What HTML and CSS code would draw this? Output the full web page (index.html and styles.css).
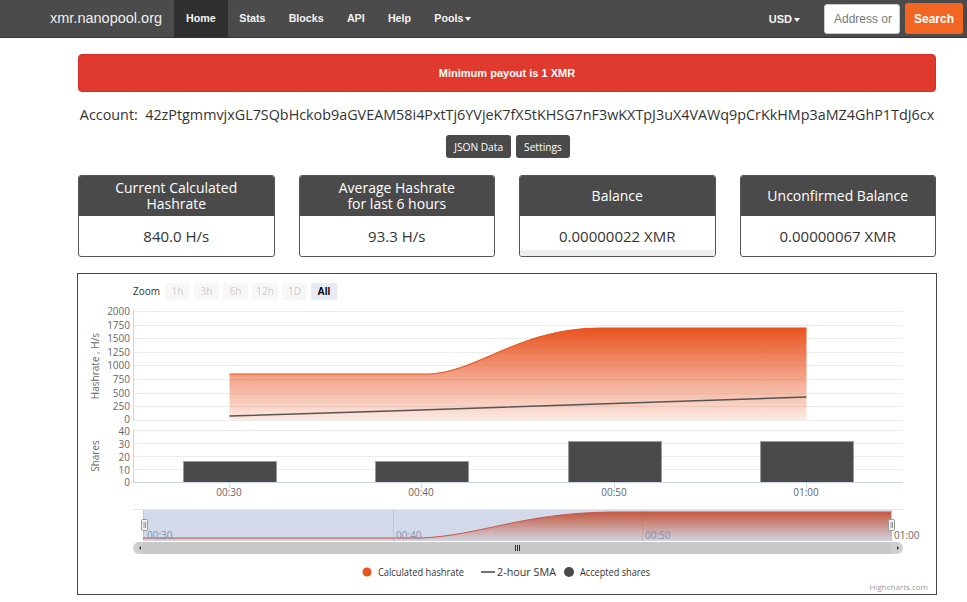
FILE: index.html
```html
<!DOCTYPE html>
<html>
<head>
<meta charset="utf-8">
<link rel="stylesheet" href="styles.css">
</head>
<body>
<nav class="navbar">
  <a class="brand">xmr.nanopool.org</a>
  <ul class="nav">
    <li class="active">Home</li>
    <li>Stats</li>
    <li>Blocks</li>
    <li>API</li>
    <li>Help</li>
    <li>Pools<span class="caret"></span></li>
  </ul>
  <div class="nav-right">
    <span class="currency">USD<span class="caret"></span></span>
    <input class="search-input" placeholder="Address or">
    <button class="search-btn">Search</button>
  </div>
</nav>
<main class="container">
  <div class="alert">Minimum payout is 1 XMR</div>
  <div class="account">Account:&nbsp; 42zPtgmmvjxGL7SQbHckob9aGVEAM58i4PxtTj6YVjeK7fX5tKHSG7nF3wKXTpJ3uX4VAWq9pCrKkHMp3aMZ4GhP1TdJ6cx</div>
  <div class="actions">
    <button class="btn">JSON Data</button>
    <button class="btn">Settings</button>
  </div>
  <div class="cards">
    <div class="card"><div class="card-head">Current Calculated<br>Hashrate</div><div class="card-body">840.0 H/s</div></div>
    <div class="card"><div class="card-head">Average Hashrate<br>for last 6 hours</div><div class="card-body">93.3 H/s</div></div>
    <div class="card"><div class="card-head">Balance</div><div class="card-body balance">0.00000022 XMR</div></div>
    <div class="card"><div class="card-head">Unconfirmed Balance</div><div class="card-body">0.00000067 XMR</div></div>
  </div>
  <div class="chart-box">
    <svg class="chart" width="857" height="320" viewBox="0 0 857 320" xmlns="http://www.w3.org/2000/svg">
      <defs>
        <linearGradient id="hg" x1="0" y1="0" x2="0" y2="1">
          <stop offset="0" stop-color="#e8531f" stop-opacity="1"/>
          <stop offset="1" stop-color="#e8531f" stop-opacity="0.12"/>
        </linearGradient>
        <linearGradient id="ng" x1="0" y1="0" x2="0" y2="1">
          <stop offset="0" stop-color="#c45a40" stop-opacity="1"/>
          <stop offset="1" stop-color="#c45a40" stop-opacity="0.05"/>
        </linearGradient>
      </defs>
      <g transform="translate(-78,-273)" font-family="'Open Sans', 'DejaVu Sans', sans-serif">
        <!-- range selector -->
        <text x="133" y="294" font-size="10" fill="#333">Zoom</text>
        <g font-size="10" fill="#cccccc" text-anchor="middle">
          <rect x="165" y="282" width="25" height="17" fill="#f7f7f7"/><text x="177.5" y="294">1h</text>
          <rect x="194" y="282" width="25" height="17" fill="#f7f7f7"/><text x="206.5" y="294">3h</text>
          <rect x="223" y="282" width="25" height="17" fill="#f7f7f7"/><text x="235.5" y="294">6h</text>
          <rect x="252" y="282" width="26" height="17" fill="#f7f7f7"/><text x="265" y="294">12h</text>
          <rect x="282" y="282" width="25" height="17" fill="#f7f7f7"/><text x="294.5" y="294">1D</text>
          <rect x="311" y="282" width="26" height="17" fill="#e6ebf5"/><text x="324" y="294" fill="#000" font-weight="bold" font-family="'Liberation Sans', Arial, sans-serif">All</text>
        </g>
        <!-- grid main -->
        <g stroke="#ececec" stroke-width="1">
          <line x1="133" x2="903" y1="310.5" y2="310.5"/>
          <line x1="133" x2="903" y1="324.5" y2="324.5"/>
          <line x1="133" x2="903" y1="337.5" y2="337.5"/>
          <line x1="133" x2="903" y1="351.5" y2="351.5"/>
          <line x1="133" x2="903" y1="364.5" y2="364.5"/>
          <line x1="133" x2="903" y1="378.5" y2="378.5"/>
          <line x1="133" x2="903" y1="392.5" y2="392.5"/>
          <line x1="133" x2="903" y1="405.5" y2="405.5"/>
          <line x1="133" x2="903" y1="419.5" y2="419.5"/>
          <line x1="133" x2="903" y1="429.5" y2="429.5"/>
          <line x1="133" x2="903" y1="442.5" y2="442.5"/>
          <line x1="133" x2="903" y1="455.5" y2="455.5"/>
          <line x1="133" x2="903" y1="468.5" y2="468.5"/>
        </g>
        <line x1="133.5" x2="133.5" y1="308" y2="420" stroke="#ccd6eb"/>
        <line x1="133.5" x2="133.5" y1="429" y2="482" stroke="#ccd6eb"/>
        <g font-size="10" fill="#666" text-anchor="end">
          <text x="130" y="314">2000</text>
          <text x="130" y="328">1750</text>
          <text x="130" y="341">1500</text>
          <text x="130" y="355">1250</text>
          <text x="130" y="368">1000</text>
          <text x="130" y="382">750</text>
          <text x="130" y="396">500</text>
          <text x="130" y="409">250</text>
          <text x="130" y="422">0</text>
          <text x="130" y="434">40</text>
          <text x="130" y="447">30</text>
          <text x="130" y="460">20</text>
          <text x="130" y="473">10</text>
          <text x="130" y="485">0</text>
        </g>
        <text transform="translate(99,365) rotate(-90)" font-size="10" fill="#666" text-anchor="middle">Hashrate , H/s</text>
        <text transform="translate(99,455) rotate(-90)" font-size="10" fill="#666" text-anchor="middle">Shares</text>
        <!-- hashrate area -->
        <path d="M229.5,373 L430,373 C480,370 520,327 600,327 L806.5,327 L806.5,419 L229.5,419 Z" fill="url(#hg)"/>
        <path d="M229.5,373 L430,373 C480,370 520,327 600,327 L806.5,327" fill="none" stroke="#e8531f" stroke-width="1.2"/>
        <path d="M229.5,415 C420,409 600,404 806.5,396" fill="none" stroke="#555" stroke-width="1.5"/>
        <!-- bars -->
        <g fill="#4a4a4a" stroke="#9a9a9a" stroke-width="1">
          <rect x="183.5" y="460.5" width="93" height="21"/>
          <rect x="375.5" y="460.5" width="93" height="21"/>
          <rect x="568.5" y="440.5" width="93" height="41"/>
          <rect x="760.5" y="440.5" width="93" height="41"/>
        </g>
        <line x1="133" x2="903" y1="481.5" y2="481.5" stroke="#ccd6eb"/>
        <g stroke="#ccd6eb">
          <line x1="229.5" x2="229.5" y1="482" y2="487"/>
          <line x1="421.5" x2="421.5" y1="482" y2="487"/>
          <line x1="614.5" x2="614.5" y1="482" y2="487"/>
          <line x1="806.5" x2="806.5" y1="482" y2="487"/>
        </g>
        <g font-size="10" fill="#666" text-anchor="middle">
          <text x="229" y="495">00:30</text>
          <text x="421" y="495">00:40</text>
          <text x="614" y="495">00:50</text>
          <text x="806" y="495">01:00</text>
        </g>
        <!-- navigator -->
        <line x1="133" x2="903" y1="508.5" y2="508.5" stroke="#e6e6e6"/>
        <rect x="143" y="509" width="748" height="31" fill="#d2daea"/>
        <g stroke="#c4c4d4">
          <line x1="143.5" x2="143.5" y1="509" y2="540"/>
          <line x1="393.5" x2="393.5" y1="509" y2="540"/>
          <line x1="642.5" x2="642.5" y1="509" y2="540"/>
        </g>
        <path d="M143,537 L420,537 C480,535 520,512 612,511 L891,511 L891,540 L143,540 Z" fill="url(#ng)"/>
        <path d="M143,537 L420,537 C480,535 520,512 612,511 L891,511" fill="none" stroke="#c9574a" stroke-width="1"/>
        <g font-size="10" fill="#8a8fa8">
          <text x="147" y="538">00:30</text>
          <text x="396" y="538">00:40</text>
          <text x="645" y="538">00:50</text>
          <text x="894" y="538" fill="#666">01:00</text>
        </g>
        <line x1="891.5" x2="891.5" y1="509" y2="540" stroke="#c4c4d4"/>
        <g fill="#f2f2f2" stroke="#999">
          <rect x="141.5" y="518.5" width="6" height="11" rx="1"/>
          <rect x="888.5" y="518.5" width="6" height="11" rx="1"/>
        </g>
        <g stroke="#999">
          <line x1="144" x2="144" y1="521" y2="527"/><line x1="145.5" x2="145.5" y1="521" y2="527"/>
          <line x1="891" x2="891" y1="521" y2="527"/><line x1="892.5" x2="892.5" y1="521" y2="527"/>
        </g>
        <!-- scrollbar -->
        <rect x="133" y="541" width="770" height="12" rx="6" fill="#cfcfcf"/>
        <rect x="143" y="541" width="748" height="12" fill="#c8c8c8"/>
        <path d="M139,547 L141,545 L141,549 Z" fill="#333"/>
        <path d="M897,545 L899,547 L897,549 Z" fill="#333"/>
        <g stroke="#333" stroke-width="1">
          <line x1="515.5" x2="515.5" y1="544" y2="550"/>
          <line x1="517.5" x2="517.5" y1="544" y2="550"/>
          <line x1="519.5" x2="519.5" y1="544" y2="550"/>
        </g>
        <!-- legend -->
        <circle cx="367" cy="571" r="4.5" fill="#e8531f"/>
        <text x="378" y="574.5" font-size="10" fill="#333" textLength="86" lengthAdjust="spacingAndGlyphs">Calculated hashrate</text>
        <line x1="481" x2="495" y1="571" y2="571" stroke="#444" stroke-width="1.5"/>
        <text x="497" y="574.5" font-size="10" fill="#333" textLength="59" lengthAdjust="spacingAndGlyphs">2-hour SMA</text>
        <circle cx="569" cy="571" r="5" fill="#4a4a4a"/>
        <text x="580" y="574.5" font-size="10" fill="#333" textLength="70" lengthAdjust="spacingAndGlyphs">Accepted shares</text>
        <text x="928" y="589" font-size="8" fill="#999" text-anchor="end">Highcharts.com</text>
      </g>
    </svg>
  </div>
</main>
</body>
</html>
```

FILE: styles.css
```css
* { box-sizing: border-box; }
body {
  margin: 0;
  background: #fff;
  font-family: "Open Sans", "DejaVu Sans", sans-serif;
  color: #333;
}
.navbar {
  height: 38px;
  background: #4b4b4b;
  border-bottom: 1px solid #333;
  display: flex;
  align-items: stretch;
  font-family: "Liberation Sans", Arial, sans-serif;
}
.brand {
  color: #eee;
  font-size: 14.5px;
  line-height: 37px;
  margin-left: 50px;
  width: 124px;
}
.nav {
  list-style: none;
  margin: 0;
  padding: 0;
  display: flex;
}
.nav li {
  color: #f4f4f4;
  font-size: 10.7px;
  font-weight: bold;
  line-height: 37px;
  padding: 0 11.6px;
}
.nav li.active {
  background: #303030;
  padding: 0 12px;
}
.caret {
  display: inline-block;
  width: 0;
  height: 0;
  margin-left: 2px;
  vertical-align: middle;
  border-top: 4px solid #f4f4f4;
  border-left: 3.5px solid transparent;
  border-right: 3.5px solid transparent;
}
.nav-right {
  margin-left: auto;
  display: flex;
  align-items: center;
  padding-right: 4px;
}
.currency {
  color: #f4f4f4;
  font-size: 11px;
  font-weight: bold;
  margin-right: 24px;
}
.search-input {
  width: 76px;
  height: 30px;
  border: 1px solid #ccc;
  border-radius: 3px;
  padding: 0 0 0 9px;
  font-family: "Liberation Sans", Arial, sans-serif;
  font-size: 12px;
  color: #555;
  margin-right: 5px;
}
.search-input::placeholder { color: #777; }
.search-btn {
  height: 31px;
  width: 58px;
  background: #f26522;
  color: #fff;
  border: none;
  border-radius: 3px;
  font-family: "Liberation Sans", Arial, sans-serif;
  font-size: 12px;
  font-weight: bold;
  padding: 0;
}
.container {
  margin-left: 78px;
  width: 858px;
  padding-top: 16px;
}
.alert {
  height: 38px;
  background: #e0392d;
  border: 1px solid #d62c2c;
  border-radius: 4px;
  color: #fff;
  font-family: "Liberation Sans", Arial, sans-serif;
  font-weight: bold;
  font-size: 11px;
  display: flex;
  align-items: center;
  justify-content: center;
}
.account {
  margin-top: 13px;
  text-align: center;
  font-size: 14.35px;
  line-height: 20px;
  color: #333;
  white-space: nowrap;
}
.actions {
  display: flex;
  justify-content: center;
  gap: 5px;
  margin-top: 10px;
  padding-left: 2px;
}
.btn {
  height: 23px;
  background: #4a4a4a;
  color: #fff;
  border: none;
  border-radius: 3px;
  font-family: "Open Sans", "DejaVu Sans", sans-serif;
  font-size: 10.2px;
  padding: 0 8px;
}
.cards {
  display: grid;
  grid-template-columns: repeat(4, 1fr);
  gap: 24px;
  margin-top: 17px;
}
.card {
  border: 1px solid #555;
  border-radius: 3px;
  overflow: hidden;
  height: 82px;
  display: flex;
  flex-direction: column;
}
.card-head {
  background: #4a4a4a;
  color: #fff;
  font-size: 14px;
  line-height: 16px;
  height: 40px;
  display: flex;
  align-items: center;
  justify-content: center;
  text-align: center;
}
.card-body {
  flex: 1;
  display: flex;
  align-items: center;
  justify-content: center;
  font-size: 15px;
  color: #333;
}
.card-body.balance {
  border-bottom: 6px solid #eee;
  padding-top: 6px;
}
.chart-box {
  margin-top: 16px;
  margin-left: -1px;
  width: 860px;
  height: 322px;
  border: 1px solid #444;
}
.chart { display: block; }
```
